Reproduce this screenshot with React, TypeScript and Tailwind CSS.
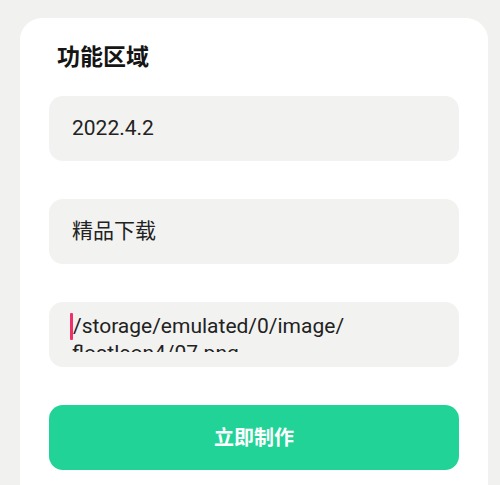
export default function App() {
  const font = { fontFamily: 'Roboto, "Noto Sans CJK SC", sans-serif' };
  return (
    <div className="h-[485px] w-[500px] overflow-hidden bg-[#f1f2f0] pt-[18px] pl-[20px]" style={font}>
      <div className="w-[468px] h-[500px] rounded-t-[22px] bg-white px-[29px]">
        <div className="pt-[24px] pl-[8px] text-[23px] leading-[32px] font-bold text-[#151515]">功能区域</div>

        <div className="mt-[22px] flex flex-col gap-[38px]">
          <div className="h-[65px] rounded-[14px] bg-[#f2f3f1] pl-[23px] flex items-center text-[21px] text-[#222]">
            2022.4.2
          </div>
          <div className="h-[65px] rounded-[14px] bg-[#f2f3f1] pl-[23px] flex items-center text-[21px] text-[#222]">
            精品下载
          </div>
          <div className="h-[65px] rounded-[14px] bg-[#f2f3f1] pl-[21px] pt-[11px]">
            <div className="h-[39px] overflow-hidden text-[21px] leading-[27px] text-[#222]">
              <div className="flex items-center">
                <span className="inline-block w-[3px] h-[27px] rounded-[1px] bg-[#f0306a]" />
                <span>/storage/emulated/0/image/</span>
              </div>
              <div className="pl-[2px]">floatleon4/07.png</div>
            </div>
          </div>
          <button className="h-[65px] rounded-[14px] bg-[#22d398] text-white text-[20px] font-bold flex items-center justify-center">
            立即制作
          </button>
        </div>
      </div>
    </div>
  );
}
